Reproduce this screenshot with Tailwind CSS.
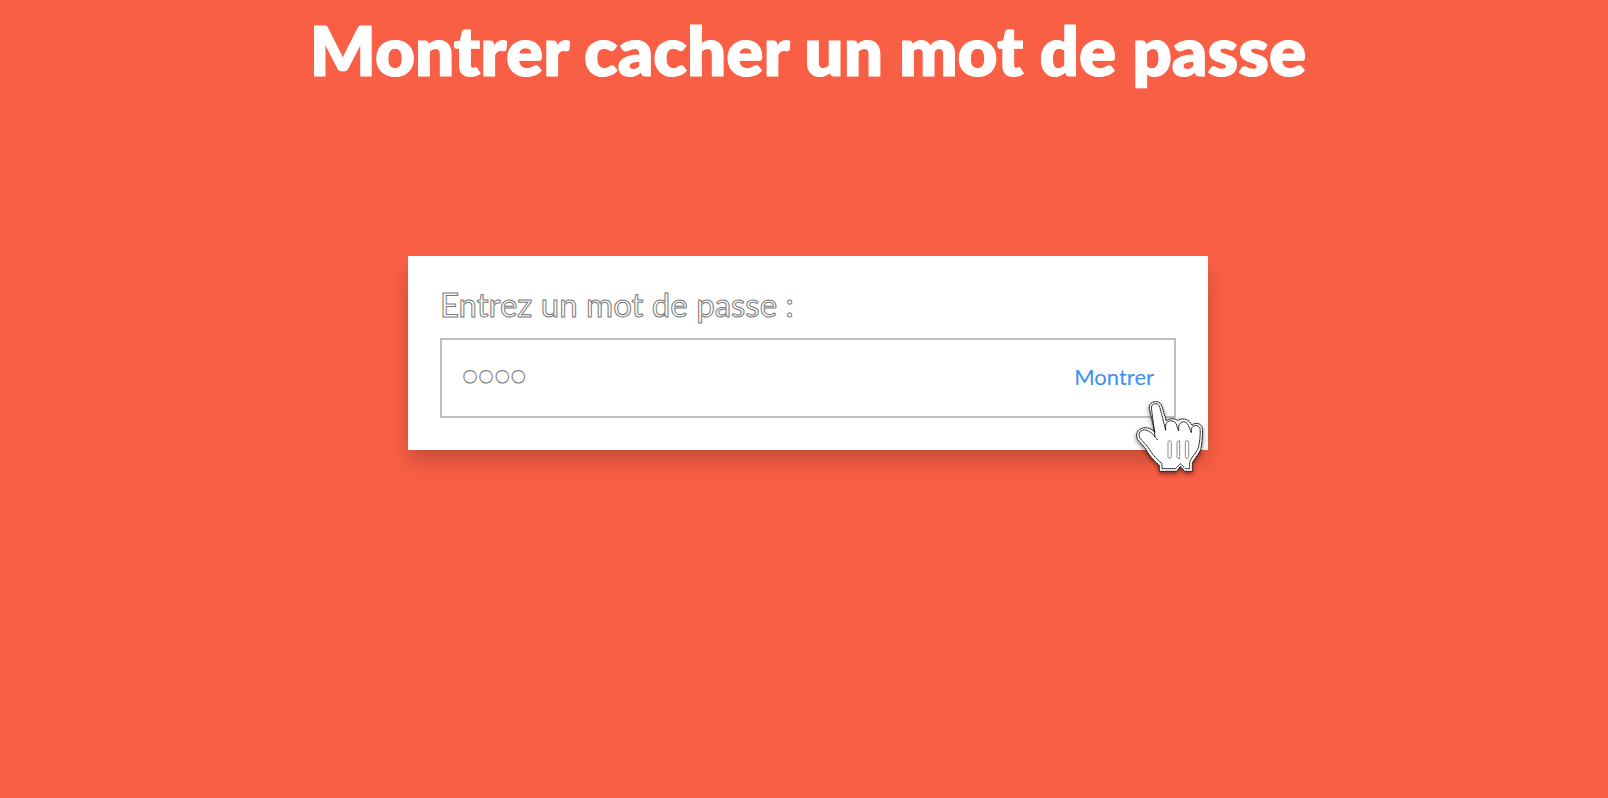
<!DOCTYPE html>
<html lang="fr">
<head>
<meta charset="utf-8">
<meta name="viewport" content="width=device-width, initial-scale=1">
<title>Montrer cacher un mot de passe</title>
<script src="https://cdn.jsdelivr.net/npm/@tailwindcss/browser@4"></script>
</head>
<body class="min-h-screen overflow-x-hidden bg-[#f95f44] font-['Lato',sans-serif]">
<main class="flex flex-col items-center pl-2">
  <h1 class="pt-3 text-center text-[69px] leading-[76px] font-extrabold text-white [-webkit-text-stroke:1px_white]">Montrer cacher un mot de passe</h1>
  <form class="relative mt-42 w-full max-w-[800px] bg-white p-8 shadow-[0_12px_20px_-2px_rgba(0,0,0,0.22)]">
    <label for="password" class="block pb-[18px] text-[33px] leading-[32px] text-white [-webkit-text-stroke:1px_#777]">Entrez un mot de passe :</label>
    <div class="flex h-20 items-center border-2 border-[#bfbfbf] px-5">
      <input id="password" type="password" value="0000" class="min-w-0 flex-1 bg-transparent pb-1 font-['Liberation_Sans',sans-serif] text-[46px] leading-[52px] text-white outline-none [-webkit-text-stroke:1px_#777]">
      <button type="button" class="cursor-pointer pb-1 text-[22px] text-[#3a8fee]">Montrer</button>
    </div>
    <svg class="pointer-events-none absolute -right-[22px] -bottom-10 size-[110px] drop-shadow-[0_2px_2px_rgba(0,0,0,0.5)]" viewBox="0 0 330 330" fill="none" stroke-linejoin="round" aria-hidden="true">
      <path d="M88 86C86 72 96 65 107 65C119 65 124 72 127 83L139 123C145 115 164 113 173 122C181 115 198 115 207 124L216 136C225 126 243 129 247 144C249 160 246 187 243 205C237 225 220 238 217 250L217 274H194L181 259L170 274H118V256C99 240 87 225 76 205L54 180C45 166 51 149 68 144C82 141 94 146 105 157Z" fill="#fff" stroke="#111" stroke-width="3" stroke-dasharray="5 1"/>
      <path d="M105 170L95 90C92 77 98 71 107 71C115 71 118 78 121 87L137 151V135C142 119 159 119 168 130L176 153V139C181 121 198 122 204 134L214 158V145C220 133 236 134 240 145C242 162 239 187 235 203C228 221 212 234 209 247V266H196L181 251L167 266H126V251C106 235 95 220 84 201L61 176C53 164 58 153 69 150C82 148 91 156 100 164L113 180" stroke="#111" stroke-width="3" stroke-dasharray="5 1"/>
      <g stroke="#555" stroke-width="2">
        <rect x="144" y="182" width="10" height="53" rx="5"/>
        <path d="M171 232V188Q172 182 179 182M171 232Q173 236 179 236"/>
        <path d="M179 184V236" stroke="#111" stroke-width="3" stroke-dasharray="3 3"/>
        <rect x="196" y="182" width="10" height="53" rx="5"/>
      </g>
    </svg>
  </form>
</main>
</body>
</html>
